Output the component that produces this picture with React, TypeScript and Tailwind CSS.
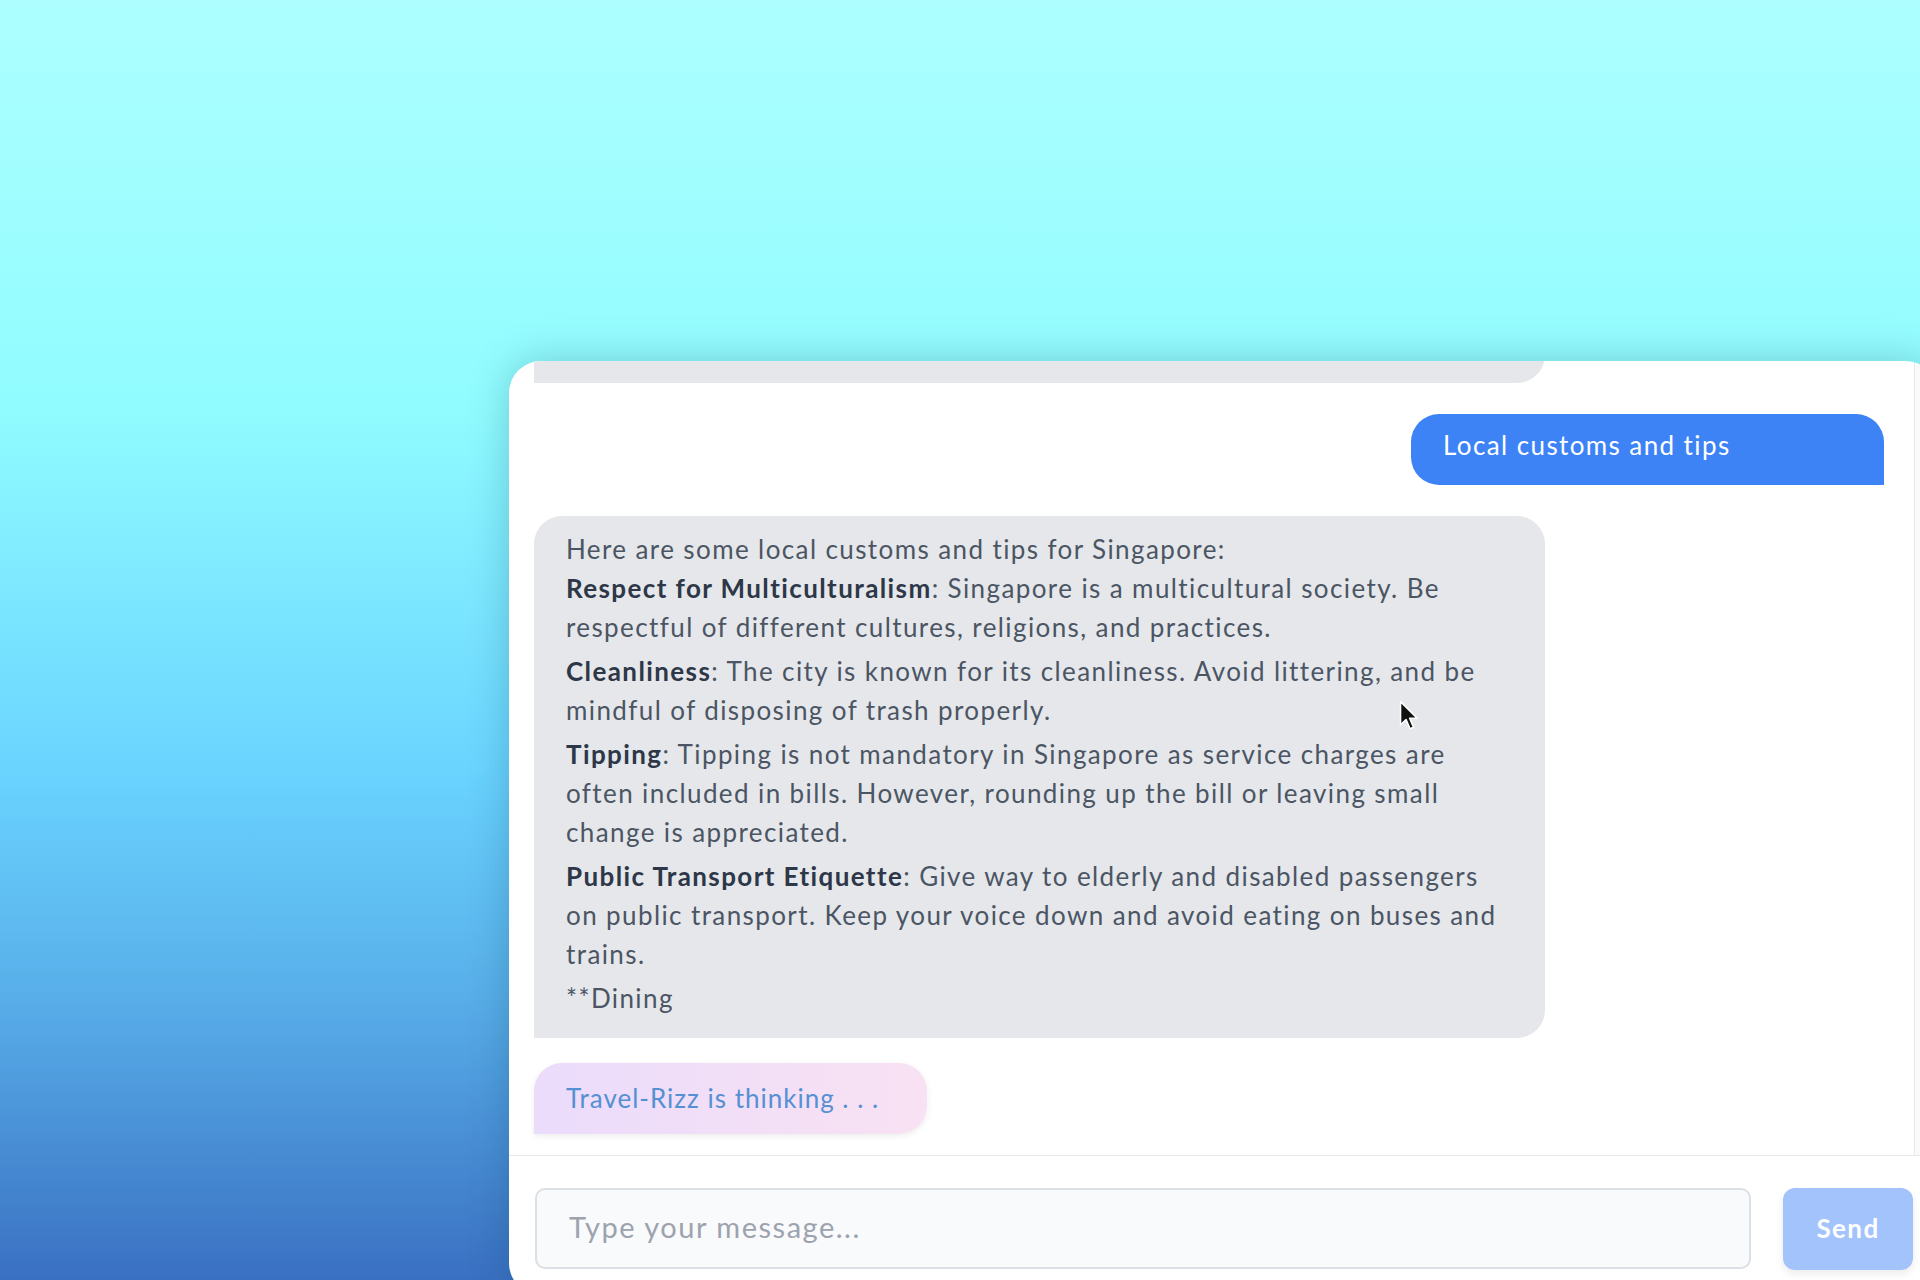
import React from "react";

function Cursor() {
  return (
    <svg
      className="absolute left-[1399px] top-[700px]"
      width="20"
      height="31"
      viewBox="0 0 13 20"
    >
      <path
        d="M1 1 L1 16 L4.6 12.6 L7.2 18.6 L9.4 17.6 L6.9 11.8 L11.8 11.8 Z"
        fill="#111"
        stroke="#fff"
        strokeWidth="1"
        strokeLinejoin="round"
      />
    </svg>
  );
}

export default function App() {
  return (
    <div className="relative w-[1920px] h-[1280px] overflow-hidden bg-[linear-gradient(to_bottom,#adffff_0%,#90fcff_32%,#6ad4ff_60%,#58aee9_78%,#3a70c2_100%)] pt-[361px] pl-[509px] font-['Lato',sans-serif] tracking-[1.4px]">
      <div className="w-[1428px] h-[934px] bg-white rounded-[32px] shadow-[0_0_40px_rgba(0,60,80,0.25)] flex flex-col overflow-hidden">
        <div className="h-[795px] flex border-b border-[#e5e7eb]">
          <div className="flex-1 flex flex-col justify-end overflow-hidden pl-[25px] pr-[30px] pb-[21px] text-[26px] leading-[39px]">
            <div className="w-[1011px] bg-[#e5e7eb] text-[#4b5563] rounded-tl-[28px] rounded-tr-[28px] rounded-br-[28px] px-8 pt-[14px] pb-[19px]">
              <p>Singapore is a vibrant city with plenty to see and do.</p>
              <p>Have a wonderful time in the city.</p>
            </div>
            <div className="mt-[31px] flex justify-end">
              <div className="w-[473px] h-[71px] bg-[#3d83f6] text-white rounded-tl-[28px] rounded-tr-[28px] rounded-bl-[28px] px-8 pt-[12px]">
                Local customs and tips
              </div>
            </div>
            <div className="mt-[31px] w-[1011px] bg-[#e5e7eb] text-[#4b5563] rounded-tl-[28px] rounded-tr-[28px] rounded-br-[28px] px-8 pt-[14px] pb-[20px]">
              <p>Here are some local customs and tips for Singapore:</p>
              <p>
                <strong className="font-bold text-[#2d3748]">Respect for Multiculturalism</strong>: Singapore is a multicultural society. Be respectful of different cultures, religions, and practices.
              </p>
              <p className="mt-[5px]">
                <strong className="font-bold text-[#2d3748]">Cleanliness</strong>: The city is known for its cleanliness. Avoid littering, and be mindful of disposing of trash properly.
              </p>
              <p className="mt-[5px]">
                <strong className="font-bold text-[#2d3748]">Tipping</strong>: Tipping is not mandatory in Singapore as service charges are often included in bills. However, rounding up the bill or leaving small change is appreciated.
              </p>
              <p className="mt-[5px]">
                <strong className="font-bold text-[#2d3748]">Public Transport Etiquette</strong>: Give way to elderly and disabled passengers on public transport. Keep your voice down and avoid eating on buses and trains.
              </p>
              <p className="mt-[5px]">**Dining</p>
            </div>
            <div className="mt-[25px] w-[393px] bg-[linear-gradient(to_right,#ebdcfc,#f8e1f2)] text-[#5590d2] tracking-[1px] rounded-tl-[28px] rounded-tr-[28px] rounded-br-[28px] px-8 py-4 shadow-[0_2px_6px_rgba(0,0,0,0.08)]">
              Travel-Rizz is thinking . . .
            </div>
          </div>
          <div className="w-[23px] border-l border-[#e5e7eb] bg-[#fafafa]" />
        </div>
        <div className="flex-1 flex items-start gap-8 pl-[26px] pr-[24px] pt-8">
          <input
            className="flex-1 h-[81px] rounded-[10px] border-2 border-[#dcdfe4] bg-[#f9fafb] px-8 pb-[4px] text-[29px] tracking-[1.5px] text-[#374151] placeholder:text-[#9ca3af] outline-none"
            placeholder="Type your message..."
          />
          <button className="w-[130px] h-[82px] rounded-[12px] bg-[#a2c3fb] text-white font-bold text-[26px] pb-[2px] shadow-[0_4px_8px_rgba(0,0,0,0.08)]">
            Send
          </button>
        </div>
      </div>
      <Cursor />
    </div>
  );
}
